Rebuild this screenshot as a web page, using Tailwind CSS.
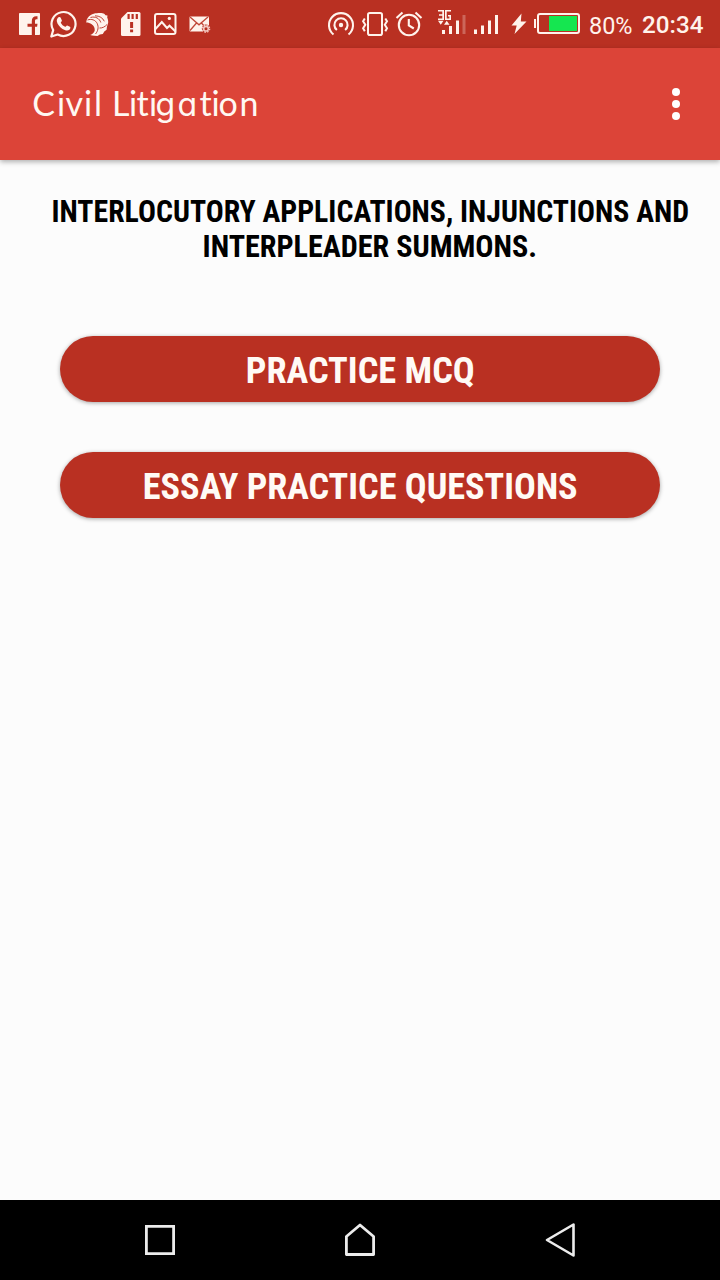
<!DOCTYPE html>
<html lang="en">
<head>
  <meta charset="UTF-8" />
  <meta name="viewport" content="width=device-width, initial-scale=1.0"/>
  <title>Civil Litigation</title>
  <script src="https://cdn.jsdelivr.net/npm/@tailwindcss/browser@4"></script>
</head>
<body class="bg-[#fcfcfc] font-['Roboto',sans-serif] flex flex-col h-screen overflow-hidden">

  <!-- Status bar -->
  <div class="h-12 shrink-0 bg-[#b93022] text-[#fff3ec] flex items-center justify-between pl-[18px] pr-4">
    <div class="flex items-center">
      <!-- Facebook -->
      <svg class="w-[31px] h-12" viewBox="18 0 31 48">
        <rect x="19" y="13" width="21" height="22" rx=".8" fill="currentColor"/>
        <path d="M31.800 35v-8.200h-4.300v-3h4.300v-2.600c0-3.200 1.700-4.900 4.500-4.900h1.200v3h-.9c-1.100 0-1.600.6-1.600 1.700v2.800h2.500l-.4 3H35V35z" fill="#b93022"/>
      </svg>
      <!-- WhatsApp -->
      <svg class="w-9 h-12" viewBox="49 0 36 48" fill="none">
        <path d="M51.300 36.500l1.900-6.400a12 12 0 1 1 4.500 4.400z" stroke="currentColor" stroke-width="2.200" stroke-linejoin="round"/>
        <path d="M58.500 17.300c.8-.5 1.900-.3 2.200.4l1.200 2.800c.2.700-1.200 1.700-1.100 2.300.9 1.900 2.400 3.200 4.300 4 .6.100 1.400-1.600 2.100-1.400l2.700 1.300c1 .5.300 2.300-.5 3-1.800 1.500-4.600.6-6.900-.8-2.500-1.600-5.300-4.600-5.700-7.600-.2-1.600.6-3.300 1.700-4z" fill="currentColor"/>
      </svg>
      <!-- Bird head -->
      <svg class="w-[34px] h-12" viewBox="85 0 34 48">
        <path d="M86.200 22.500c.3-3.500 2-6 4.600-7.500 1.800-1.200 4-1.700 6-1.700 2.600-.6 5.800-.6 7.700.7l1 1.200 2 .3-.3 2c.8 1.500 1 3.200 1 5l-1.300 4.500-.3 2.800-2.300 1.800-1.500 2.500-3 .5-2.300 1.400-3.200-.2c-1.500 0-2.800-.2-4.100-.8 2.500-1 4.200-2.600 4.500-4.500.3-2.500-.8-4.600-3-6.300-1.800-1.300-3.700-1.800-5.800-1.700z" fill="currentColor"/>
        <g fill="none" stroke="#b93022" stroke-width=".9">
          <path d="M87.500 20c4-1.500 8 0 9.700 3.500 1.700 3.700.8 7.500-1.700 10.500"/>
          <path d="M90.500 17.500c5-1.500 9 1 10.300 5M95 15.800c4.500 0 8 2.200 9.300 5.500"/>
          <path d="M99.500 28c3 .2 5.500-1.300 7.500-3.500"/>
        </g>
      </svg>
      <!-- SD card alert -->
      <svg class="w-[34px] h-12" viewBox="119 0 34 48">
        <path d="M127.500 12H139a1.500 1.500 0 0 1 1.500 1.500v21A1.500 1.500 0 0 1 139 36h-16.500a1.500 1.500 0 0 1-1.500-1.500V18.500z" fill="currentColor"/>
        <path d="M127.500 14h2.200v5h-2.200zM131.500 14h2.200v5h-2.200zM135.700 14h2.200v5h-2.200zM130.100 22h3v6h-3zM130.100 29.500h3v2.800h-3z" fill="#b93022"/>
      </svg>
      <!-- Picture -->
      <svg class="w-[34px] h-12" viewBox="153 0 34 48" fill="none" stroke="currentColor" stroke-width="2">
        <rect x="155" y="14" width="20.500" height="20" rx="2"/>
        <path d="M155 29.500l6.800-7.500 5.200 6 2.500-2.300 6 5.800"/>
        <circle cx="169.300" cy="18.400" r="1.600" fill="currentColor" stroke="none"/>
      </svg>
      <!-- Mail -->
      <svg class="w-6 h-12" viewBox="187 0 24 48">
        <rect x="189.500" y="16.500" width="19.500" height="15" rx="1" fill="currentColor"/>
        <path d="M190 17l9 7.800 9-7.800M190 30.500l6.500-7.500M208 30.500l-6.500-7.500" fill="none" stroke="#c04738" stroke-width="1.300"/>
        <circle cx="206" cy="28.700" r="4.200" fill="#b93022"/>
        <circle cx="206" cy="28.700" r="2.300" fill="none" stroke="#f3c8c0" stroke-width="1.600"/>
        <circle cx="206" cy="28.700" r="3.600" fill="none" stroke="#f3c8c0" stroke-width="1.400" stroke-dasharray="1.500 1.330"/>
      </svg>
    </div>

    <div class="flex items-center">
      <!-- Hotspot -->
      <svg class="w-[34px] h-12" viewBox="327 0 34 48" fill="none" stroke="currentColor" stroke-width="2.100">
        <path d="M333.500 34.500a12 12 0 1 1 15 0"/>
        <path d="M336.900 30a6.600 6.600 0 1 1 8.200 0"/>
        <circle cx="341" cy="25" r="2.200" fill="currentColor" stroke="none"/>
      </svg>
      <!-- Vibrate -->
      <svg class="w-[34px] h-12" viewBox="361 0 34 48" fill="none" stroke="currentColor" stroke-width="2">
        <rect x="368" y="13" width="14" height="22" rx="1.800"/>
        <path d="M364.800 18.500l-1.700 2.800 2.200 3.400-2.200 3.500 1.700 3M385.300 18.500l1.700 2.800-2.200 3.400 2.200 3.500-1.700 3"/>
      </svg>
      <!-- Alarm -->
      <svg class="w-[42px] h-12" viewBox="395 0 42 48" fill="none" stroke="currentColor" stroke-width="2.100">
        <circle cx="409" cy="25" r="10.200"/>
        <path d="M408.800 19v6.500l5 3M396.500 18l6-5.500M421.500 18l-6-5.500"/>
      </svg>
      <!-- 3G signal -->
      <svg class="w-[37px] h-12" viewBox="437 0 37 48" fill="currentColor">
        <path d="M438 10h6v10h-6v-1.600h4.300v-2.700h-3.300v-1.500h3.300v-2.600H438zM445 10h6v1.600h-4.300v6.800h2.700v-2h-1.400v-1.500h3V20h-6z"/>
        <path d="M438 20.700h5.500l-2.750 4zM444 24.700h5.500l-2.750-4z"/>
        <path d="M442 30h3v4h-3zM449 26h3v8h-3zM456 20.500h3V34h-3z"/>
        <path d="M462.500 15h3v19h-3z" opacity=".28"/>
      </svg>
      <!-- Signal -->
      <svg class="w-[37px] h-12" viewBox="474 0 37 48" fill="currentColor">
        <path d="M474 29.500h3V34h-3zM481 25.500h3V34h-3zM488 20.500h3V34h-3zM495 15h3v19h-3z"/>
      </svg>
      <!-- Battery -->
      <svg class="w-[69px] h-12" viewBox="511 0 69 48">
        <path d="M521.500 13.500L511.500 25.500h5.200l-2.200 8.500 12-12.500h-5.700z" fill="currentColor"/>
        <rect x="534" y="19" width="2" height="9" fill="currentColor"/>
        <rect x="538" y="14" width="41" height="19" rx="2" fill="none" stroke="currentColor" stroke-width="2"/>
        <rect x="549" y="16" width="28" height="15" fill="#15e650"/>
      </svg>
      <svg class="w-[124px] h-12" viewBox="580 0 124 48" fill="currentColor">
        <text x="589" y="34" font-size="24" textLength="43.500" lengthAdjust="spacingAndGlyphs" class="font-normal">80%</text>
        <text x="642" y="33" font-size="24" textLength="61.500" lengthAdjust="spacingAndGlyphs" class="font-medium">20:34</text>
      </svg>
    </div>
  </div>

  <!-- App bar -->
  <header class="h-28 shrink-0 bg-[#dc4438] flex items-center justify-between pl-8 pr-10 shadow-[0_2px_5px_rgba(0,0,0,0.3)]">
    <svg class="w-60 h-28" viewBox="32 48 240 112" fill="#fff8f2" font-family="Lato, sans-serif" font-size="34">
      <text x="32.200 57 65.500 84 94 102 112 129 136.500 149 155.500 177.500 199.500 211.500 218.500 239.500" y="116">Civil Liti<tspan class="font-['Inter'] font-normal [font-feature-settings:'cv11']" font-size="32">ga</tspan>tion</text>
    </svg>
    <button class="flex flex-col gap-1" aria-label="More options">
      <span class="size-2 rounded-full bg-white"></span>
      <span class="size-2 rounded-full bg-white"></span>
      <span class="size-2 rounded-full bg-white"></span>
    </button>
  </header>

  <main class="flex-1 flex flex-col">
    <h1>
      <svg class="w-full h-[120px] font-bold font-stretch-condensed" viewBox="0 160 720 120" font-size="30.500">
        <text x="51.500" y="222.300" textLength="637.500" lengthAdjust="spacingAndGlyphs">INTERLOCUTORY APPLICATIONS, INJUNCTIONS AND</text>
        <text x="202.500" y="257.300" textLength="334.500" lengthAdjust="spacingAndGlyphs">INTERPLEADER SUMMONS.</text>
      </svg>
    </h1>

    <div class="flex flex-col gap-[50px] px-[60px] pt-14">
      <button class="h-[66px] rounded-full bg-[#b93022] shadow-[0_1px_4px_rgba(0,0,0,0.35)]">
        <svg class="w-full h-[66px] font-bold font-stretch-condensed" viewBox="60 336 600 66" fill="#fffaf5" font-size="36.500">
          <text x="245.800" y="383.300" textLength="229" lengthAdjust="spacingAndGlyphs">PRACTICE MCQ</text>
        </svg>
      </button>
      <button class="h-[66px] rounded-full bg-[#b93022] shadow-[0_1px_4px_rgba(0,0,0,0.35)]">
        <svg class="w-full h-[66px] font-bold font-stretch-condensed" viewBox="60 452 600 66" fill="#fffaf5" font-size="36.500">
          <text x="142.800" y="499.300" textLength="434.800" lengthAdjust="spacingAndGlyphs">ESSAY PRACTICE QUESTIONS</text>
        </svg>
      </button>
    </div>
  </main>

  <!-- Navigation bar -->
  <nav class="h-20 shrink-0 bg-black text-[#ececec] flex items-center justify-center gap-[160px]">
    <svg class="w-10 h-20" viewBox="140 1200 40 80" fill="none" stroke="currentColor" stroke-width="2.800">
      <path d="M146.400 1226.400h27.200v27.200h-27.200z"/>
    </svg>
    <svg class="w-10 h-20" viewBox="340 1200 40 80" fill="none" stroke="currentColor" stroke-width="2.800" stroke-linejoin="round">
      <path d="M346.400 1254.500v-18l13.600-11.500 13.600 11.500v18z"/>
    </svg>
    <svg class="w-10 h-20" viewBox="540 1200 40 80" fill="none" stroke="currentColor" stroke-width="2.600" stroke-linejoin="round">
      <path d="M573.500 1224.500v31l-26.500-15.500z"/>
    </svg>
  </nav>

</body>
</html>
